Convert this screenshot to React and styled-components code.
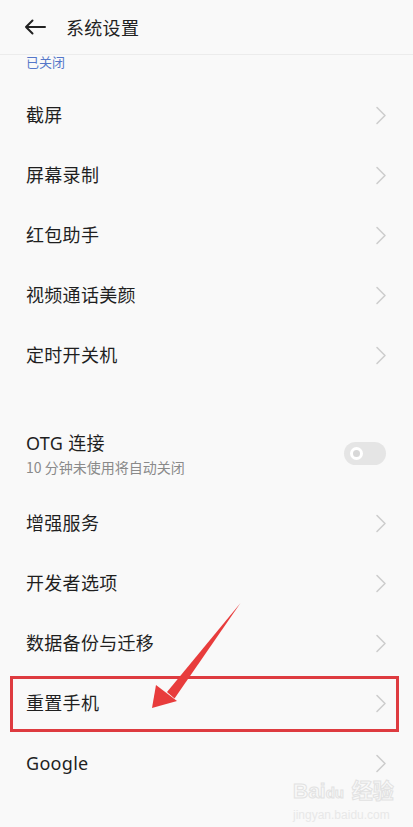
import React from "react";
import styled, { createGlobalStyle } from "styled-components";

const GlobalStyle = createGlobalStyle`
  html, body {
    margin: 0;
    padding: 0;
    background: #f9f9f9;
  }
  body {
    font-family: "Noto Sans CJK SC", "Noto Sans", sans-serif;
    color: #222222;
  }
`;

const topItems = ["截屏", "屏幕录制", "红包助手", "视频通话美颜", "定时开关机"];
const bottomItems = ["增强服务", "开发者选项", "数据备份与迁移"];

function Chevron() {
  return (
    <svg width="12" height="19" viewBox="0 0 12 19" fill="none">
      <path
        d="M2 1.5 L10 9.5 L2 17.5"
        stroke="#cccccc"
        strokeWidth="1.5"
        strokeLinecap="round"
        strokeLinejoin="round"
      />
    </svg>
  );
}

function SettingRow({ title, marked }) {
  return (
    <Row $marked={marked}>
      <RowTitle>{title}</RowTitle>
      <Chevron />
    </Row>
  );
}

export default function App() {
  return (
    <Page>
      <GlobalStyle />
      <Header>
        <BackButton>
          <svg width="22" height="16" viewBox="0 0 22 16" fill="none">
            <path
              d="M21 8 H2 M8.5 1.5 L2 8 L8.5 14.5"
              stroke="#222"
              strokeWidth="2"
              strokeLinecap="round"
              strokeLinejoin="round"
            />
          </svg>
        </BackButton>
        <HeaderTitle>系统设置</HeaderTitle>
      </Header>

      <StatusLine>已关闭</StatusLine>

      {topItems.map((t) => (
        <SettingRow key={t} title={t} />
      ))}

      <GroupGap />

      <ToggleRow>
        <ToggleText>
          <RowTitle>OTG 连接</RowTitle>
          <SubTitle>10 分钟未使用将自动关闭</SubTitle>
        </ToggleText>
        <Switch>
          <Knob />
        </Switch>
      </ToggleRow>

      {bottomItems.map((t) => (
        <SettingRow key={t} title={t} />
      ))}
      <SettingRow title="重置手机" marked />
      <SettingRow title="Google" />

      <Arrow width="413" height="827" viewBox="0 0 413 827">
        <path d="M240.5 603 L167 692 L174.5 698.5 Z" fill="#e83c3c" />
        <path d="M152 708 L156 685 L177 701 Z" fill="#e83c3c" />
      </Arrow>

      <Watermark>
        <WmLogo>
          Bai<WmDu>du</WmDu> 经验
        </WmLogo>
        <WmUrl>jingyan.baidu.com</WmUrl>
      </Watermark>
    </Page>
  );
}

const Page = styled.div`
  position: relative;
  width: 413px;
  height: 827px;
  overflow: hidden;
  background: #f9f9f9;
`;

const Header = styled.div`
  height: 54px;
  display: flex;
  align-items: center;
  padding: 0 26px 0 24px;
  border-bottom: 1px solid #ececec;
  box-sizing: content-box;
`;

const BackButton = styled.div`
  width: 22px;
  height: 16px;
  display: flex;
  margin-top: -1px;
`;

const HeaderTitle = styled.div`
  margin-left: 20px;
  font-size: 18px;
  line-height: 24px;
  color: #222;
  letter-spacing: 0.3px;
`;

const StatusLine = styled.div`
  height: 30px;
  padding-left: 26px;
  font-size: 13px;
  line-height: 13px;
  color: #5577c9;
`;

const Row = styled.div`
  position: relative;
  height: 60px;
  display: flex;
  align-items: center;
  justify-content: space-between;
  padding: 0 26px 0 26px;

  ${(p) =>
    p.$marked &&
    `
    &::after {
      content: "";
      position: absolute;
      left: 10px;
      right: 14px;
      top: 3px;
      bottom: 1px;
      border: 3px solid #de3b40;
      box-sizing: border-box;
    }
  `}
`;

const RowTitle = styled.div`
  font-size: 18px;
  line-height: 24px;
  color: #1f1f1f;
  font-family: "Noto Sans", "Noto Sans CJK SC", sans-serif;
  letter-spacing: 0.3px;
`;

const GroupGap = styled.div`
  height: 30px;
`;

const ToggleRow = styled.div`
  height: 78px;
  display: flex;
  align-items: center;
  justify-content: space-between;
  padding: 0 27px 0 26px;
`;

const ToggleText = styled.div`
  display: flex;
  flex-direction: column;
  gap: 3px;
  margin-top: -1px;
`;

const SubTitle = styled.div`
  font-size: 14px;
  line-height: 18px;
  color: #8a8a8a;
`;

const Switch = styled.div`
  width: 42px;
  height: 23px;
  border-radius: 12px;
  background: #e5e5e5;
  display: flex;
  align-items: center;
  padding-left: 6px;
  box-sizing: border-box;
  margin-top: -1px;
`;

const Knob = styled.div`
  width: 13px;
  height: 13px;
  border-radius: 50%;
  border: 3px solid #ffffff;
  background: #d8d8d8;
  box-sizing: border-box;
`;

const Arrow = styled.svg`
  position: absolute;
  left: 0;
  top: 0;
  pointer-events: none;
`;

const Watermark = styled.div`
  position: absolute;
  left: 293px;
  top: 779px;
  display: flex;
  flex-direction: column;
  align-items: flex-start;
  pointer-events: none;
`;

const WmLogo = styled.div`
  font-family: "Liberation Sans", "Noto Sans CJK SC", sans-serif;
  font-size: 21px;
  line-height: 24px;
  font-weight: bold;
  color: transparent;
  -webkit-text-stroke: 1px #e2e2e2;
`;

const WmDu = styled.span`
  font-size: 15px;
  margin-right: 2px;
`;

const WmUrl = styled.div`
  font-family: "Liberation Sans", sans-serif;
  font-size: 12px;
  line-height: 14px;
  color: #e8e8e8;
  margin-top: 3px;
`;
